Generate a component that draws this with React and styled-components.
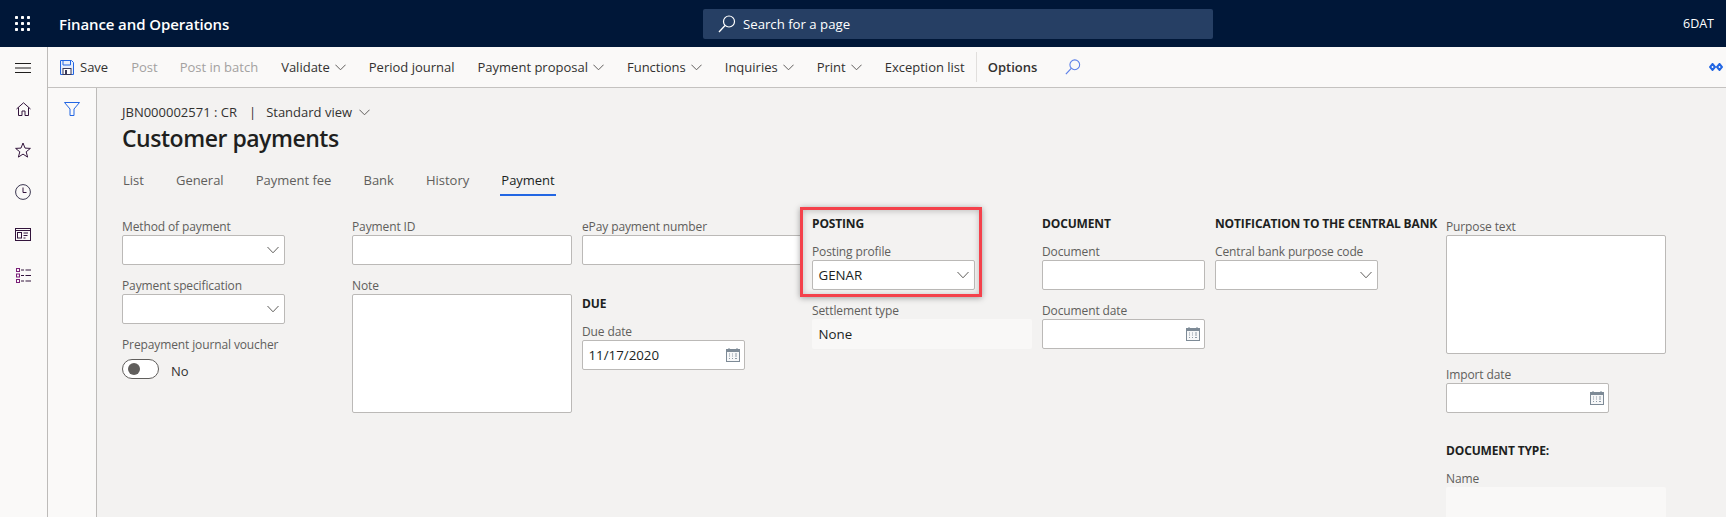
import React from "react";
import styled, { createGlobalStyle } from "styled-components";

const Global = createGlobalStyle`
  html, body { margin: 0; padding: 0; height: 100%; }
  body { font-family: "Open Sans", "Noto Sans", sans-serif; background: #f3f2f1; overflow: hidden; }
  * { box-sizing: border-box; }
`;
const Page = styled.div`
  width: 1726px; height: 517px; display: flex; flex-direction: column; overflow: hidden;
`;
const Header = styled.header`
  height: 47px; flex: none; background: #001738; color: #fff; display: flex; align-items: center; position: relative;
`;
const Waffle = styled.div`width: 59px; flex: none; padding-left: 15px; display: flex; align-items: center;`;
const AppTitle = styled.div`font-size: 15px; font-weight: 600; width: 644px; flex: none; letter-spacing: -0.1px;`;
const SearchBox = styled.div`
  width: 510px; height: 30px; background: #263f64; border-radius: 2px; display: flex; align-items: center;
  padding-left: 15px; gap: 7px; font-size: 13.2px; color: #fff;
`;
const Company = styled.div`margin-left: auto; margin-right: 12px; font-size: 12.5px;`;
const Body = styled.div`flex: 1; display: flex; min-height: 0;`;
const Sidebar = styled.nav`
  width: 48px; flex: none; background: #faf9f8; border-right: 1px solid #bdbbb9; display: flex; flex-direction: column;
  align-items: center; padding-right: 1px;
`;
const SideIcon = styled.div`height: 41.800px; width: 100%; display: flex; align-items: center; justify-content: center; margin-top: ${p => p.$mt || 0}px;`;
const Main = styled.div`flex: 1; display: flex; flex-direction: column; min-width: 0;`;
const Toolbar = styled.div`
  height: 41px; flex: none; background: #faf9f8; border-bottom: 1px solid #c4c2c0; display: flex; align-items: center; padding-left: 12px; position: relative;
  font-size: 13px; color: #323130;
`;
const ToolButton = styled.div`
  display: flex; align-items: center; gap: ${p => p.$gap ?? 5}px; margin-right: ${p => p.$mr ?? 23}px; white-space: nowrap;
  color: ${p => p.$off ? "#a3a1a0" : "#323130"};
  font-weight: ${p => p.$bold ? 600 : 400};
`;
const ToolSep = styled.div`width: 1px; height: 30px; background: #e1dfdd; margin-right: 11px;`;
const RightIcon = styled.div`margin-left: auto; margin-right: 3px; display: flex;`;
const Lower = styled.div`flex: 1; display: flex; min-height: 0;`;
const FilterPane = styled.div`
  width: 49px; flex: none; background: #faf9f8; border-right: 1px solid #bdbbb9; display: flex; justify-content: center; padding: 14px 1px 0 0;
`;
const Content = styled.div`flex: 1; padding: 14px 0 0 25px; min-width: 0; background: #f3f2f1;`;
const Crumb = styled.div`display: flex; align-items: center; font-size: 13px; color: #323130; height: 20px;`;
const CrumbBar = styled.span`margin: 0 10px 0 12px;`;
const ChevSlot = styled.span`margin-left: 7px; display: flex;`;
const Title = styled.h1`font-size: 23px; font-weight: 600; margin: 0; color: #201f1e; height: 33px; line-height: 33px; letter-spacing: -0.47px;`;
const Tabs = styled.div`display: flex; margin-top: 15px; height: 26px;`;
const Tab = styled.div`
  font-size: 13px; color: ${p => p.$on ? "#201f1e" : "#605e5c"}; margin-right: 30.200px; padding: 0 1px; height: 26px; line-height: 20px; letter-spacing: -0.03px;
  border-bottom: 2px solid ${p => p.$on ? "#2266e3" : "transparent"};
`;
const Form = styled.div`display: flex; margin-top: 17px; align-items: flex-start;`;
const Col = styled.div`width: ${p => p.$w}px; flex: none; position: relative; padding-top: ${p => p.$pt || 0}px;`;
const Heading = styled.div`
  height: 20px; line-height: 22px; font-size: 12px; font-weight: 700; color: #201f1e; margin-top: ${p => p.$mt || 0}px; margin-bottom: 7px; white-space: nowrap; letter-spacing: -0.15px;
`;
const Field = styled.div`margin-bottom: 9px; width: ${p => p.$w}px;`;
const Label = styled.div`height: 20px; line-height: 24px; font-size: 12px; color: #605e5c; white-space: nowrap; letter-spacing: -0.12px;`;
const Box = styled.div`
  height: ${p => p.$h || 30}px; background: ${p => p.$ro ? "#f9f8f7" : "#fff"}; border: ${p => p.$ro ? "none" : "1px solid #bbb9b7"}; border-radius: 2px;
  display: flex; align-items: center; justify-content: space-between; padding: 0 4px 0 ${p => p.$ro ? 6.500 : 5.500}px; font-size: 13.300px; color: #201f1e;
`;
const ToggleRow = styled.div`display: flex; align-items: center; gap: 12px; margin-top: 4px;`;
const Track = styled.div`width: 37px; height: 20px; border: 1px solid #605e5c; border-radius: 10px; background: #fff; padding: 3px 0 0 5px;`;
const Knob = styled.div`width: 12px; height: 12px; border-radius: 50%; background: #605e5c;`;
const ToggleText = styled.span`font-size: 13px; color: #323130; padding-top: 5px;`;
const Callout = styled.div`
  position: absolute; left: -12px; top: -6px; width: 182px; height: 90px; border: 3px solid #f4414b; box-shadow: 0 1px 6px rgba(0,0,0,.35), inset 0 1px 6px rgba(0,0,0,.22); pointer-events: none;
`;

const Chevron = ({ c = "#605e5c" }) => (
  <svg width="11" height="7" viewBox="0 0 11 7" fill="none"><path d="M.4.7 5.500 5.800 10.600.7" stroke={c} strokeWidth="1" /></svg>
);
const BoxChevron = () => (
  <svg width="12" height="8" viewBox="0 0 12 8" fill="none" style={{ marginRight: 1 }}><path d="M.5 1 6 6.800 11.500 1" stroke="#605e5c" strokeWidth="1" /></svg>
);
const CalendarIcon = () => (
  <svg width="14" height="14" viewBox="0 0 14 14" fill="none" style={{ marginBottom: 1 }}>
    <rect x=".5" y="1.500" width="13" height="12" fill="#f6f7f8" stroke="#7d8a96" />
    <rect x="1" y="2" width="12" height="2" fill="#7d8a96" />
    <path d="M3 0v2M11 0v2" stroke="#7d8a96" />
    <path d="M3 6h1M6 6h1M9 6h2M3 8h1M6 8h1M9 8h2M3 10.500h1M6 10.500h1M9 10.500h2" stroke="#8d99a5" />
  </svg>
);
const SearchIcon = ({ c, size = 18 }) => (
  <svg width={size} height={size} viewBox="0 0 18 18" fill="none"><circle cx="11" cy="6.500" r="5.500" stroke={c} strokeWidth="1.200" /><path d="M7 10.500 1 17" stroke={c} strokeWidth="1.300" /></svg>
);
const dark = "#32143c";
const Icons = {
  menu: <svg width="16" height="10" viewBox="0 0 16 10"><path d="M0 .5h16M0 5h16M0 9.500h16" stroke="#201f1e" strokeWidth="1" /></svg>,
  home: <svg width="15" height="14" viewBox="0 0 15 14" fill="none"><path d="M.5 7 7.500.8 14.500 7M2.500 5.500v8h3.500V9h3v4.500h3.500v-8" stroke={dark} strokeWidth="1" /></svg>,
  star: <svg width="16" height="16" viewBox="0 0 16 16" fill="none"><path d="M8 1l2 5.100 5.400.3-4.200 3.400 1.400 5.300L8 12.100l-4.600 3 1.400-5.300L.6 6.400 6 6.100z" stroke={dark} strokeWidth="1" /></svg>,
  clock: <svg width="16" height="16" viewBox="0 0 16 16" fill="none"><circle cx="8" cy="8" r="7.400" stroke="#3a3650" strokeWidth="1" /><path d="M8 3.500V8.500H11.500" stroke={dark} strokeWidth="1" /></svg>,
  work: <svg width="16" height="13" viewBox="0 0 16 13" fill="none"><rect x=".5" y=".5" width="15" height="12" stroke={dark} /><path d="M0 2.500h16" stroke={dark} /><rect x="2.500" y="4.500" width="4" height="5.500" stroke={dark} /><path d="M8.500 5h4.500M8.500 7.500h4M8.500 10h2" stroke={dark} /></svg>,
  list: <svg width="15" height="15" viewBox="0 0 15 15" fill="none"><rect x=".5" y=".5" width="3" height="3" stroke="#7a1f78" /><rect x=".5" y="6" width="3" height="3" stroke="#7a1f78" /><rect x=".5" y="11.500" width="3" height="3" stroke="#7a1f78" /><path d="M5 2h3M9.500 2H15M5 7.500h3M9.500 7.500H15M5 13h3M9.500 13H15" stroke="#32143c" /></svg>,
};
const Save = () => (
  <svg width="14" height="15" viewBox="0 0 14 15" fill="none"><path d="M.5.5h11l2 2v12H.5z" fill="#e9effb" stroke="#2266e3" /><path d="M3 .5v4.500h7.500V.5" stroke="#2266e3" /><rect x="3" y="8.500" width="8" height="6" fill="#fff" stroke="#3a3a5a" /><rect x="5" y="10" width="2" height="4.500" fill="#3a3a5a" /></svg>
);
const FilterIcon = () => (
  <svg width="16" height="14" viewBox="0 0 16 14" fill="none"><path d="M.5.500h15L10 7v6.500H6V7z" stroke="#2266e3" strokeWidth="1" strokeLinejoin="round" /></svg>
);
const Diamonds = () => (
  <svg width="14" height="8" viewBox="0 0 14 8" fill="none"><path d="M3.500 1 6 4 3.500 7 1 4zM10.500 1 13 4 10.500 7 8 4z" stroke="#2266e3" strokeWidth="2" /></svg>
);
const WaffleIcon = () => (
  <svg width="16" height="15" viewBox="0 0 16 15" fill="#fff">
    {[0, 6, 12].flatMap(y => [0, 6, 12].map(x => <rect key={x + "-" + y} x={x} y={y} width="3" height="3" rx=".8" />))}
  </svg>
);

const F = ({ label, children, w }) => (<Field $w={w}><Label>{label}</Label>{children}</Field>);
const Select = ({ value }) => <Box><span>{value}</span><BoxChevron /></Box>;
const DateBox = ({ value }) => <Box><span>{value}</span><CalendarIcon /></Box>;

export default function App() {
  return (
    <Page>
      <Global />
      <Header>
        <Waffle><WaffleIcon /></Waffle>
        <AppTitle>Finance and Operations</AppTitle>
        <SearchBox><SearchIcon c="#fff" /><span>Search for a page</span></SearchBox>
        <Company>6DAT</Company>
      </Header>
      <Body>
        <Sidebar>
          <SideIcon>{Icons.menu}</SideIcon>
          <SideIcon $mt={-1}>{Icons.home}</SideIcon>
          <SideIcon>{Icons.star}</SideIcon>
          <SideIcon>{Icons.clock}</SideIcon>
          <SideIcon>{Icons.work}</SideIcon>
          <SideIcon>{Icons.list}</SideIcon>
        </Sidebar>
        <Main>
          <Toolbar>
            <ToolButton $gap={6}><Save /><span>Save</span></ToolButton>
            <ToolButton $off $mr={22}>Post</ToolButton>
            <ToolButton $off>Post in batch</ToolButton>
            <ToolButton>Validate <Chevron /></ToolButton>
            <ToolButton>Period journal</ToolButton>
            <ToolButton>Payment proposal <Chevron /></ToolButton>
            <ToolButton>Functions <Chevron /></ToolButton>
            <ToolButton>Inquiries <Chevron /></ToolButton>
            <ToolButton>Print <Chevron /></ToolButton>
            <ToolButton $mr={11}>Exception list</ToolButton>
            <ToolSep />
            <ToolButton $bold $mr={28}>Options</ToolButton>
            <SearchIcon c="#5b7fe8" size={16} />
            <RightIcon><Diamonds /></RightIcon>
          </Toolbar>
          <Lower>
            <FilterPane><FilterIcon /></FilterPane>
            <Content>
              <Crumb>JBN000002571 : CR<CrumbBar>|</CrumbBar>Standard view<ChevSlot><Chevron /></ChevSlot></Crumb>
              <Title>Customer payments</Title>
              <Tabs>
                <Tab>List</Tab>
                <Tab>General</Tab>
                <Tab>Payment fee</Tab>
                <Tab>Bank</Tab>
                <Tab>History</Tab>
                <Tab $on>Payment</Tab>
              </Tabs>
              <Form>
                <Col $w={230} $pt={2}>
                  <F label="Method of payment" w={163}><Select /></F>
                  <F label="Payment specification" w={163}><Select /></F>
                  <Label>Prepayment journal voucher</Label>
                  <ToggleRow><Track><Knob /></Track><ToggleText>No</ToggleText></ToggleRow>
                </Col>
                <Col $w={230} $pt={2}>
                  <F label="Payment ID" w={220}><Box /></F>
                  <F label="Note" w={220}><Box $h={119} /></F>
                </Col>
                <Col $w={230} $pt={2}>
                  <F label="ePay payment number" w={220}><Box /></F>
                  <Heading $mt={28}>DUE</Heading>
                  <F label="Due date" w={163}><DateBox value="11/17/2020" /></F>
                </Col>
                <Col $w={230}>
                  <Heading>POSTING</Heading>
                  <F label="Posting profile" w={163}><Select value="GENAR" /></F>
                  <F label="Settlement type" w={220}><Box $ro>None</Box></F>
                  <Callout />
                </Col>
                <Col $w={173}>
                  <Heading>DOCUMENT</Heading>
                  <F label="Document" w={163}><Box /></F>
                  <F label="Document date" w={163}><DateBox /></F>
                </Col>
                <Col $w={231}>
                  <Heading>NOTIFICATION TO THE CENTRAL BANK</Heading>
                  <F label="Central bank purpose code" w={163}><Select /></F>
                </Col>
                <Col $w={220} $pt={2}>
                  <F label="Purpose text" w={220}><Box $h={119} /></F>
                  <F label="Import date" w={163}><DateBox /></F>
                  <Heading $mt={27}>DOCUMENT TYPE:</Heading>
                  <F label="Name" w={220}><Box $ro $h={60} /></F>
                </Col>
              </Form>
            </Content>
          </Lower>
        </Main>
      </Body>
    </Page>
  );
}
